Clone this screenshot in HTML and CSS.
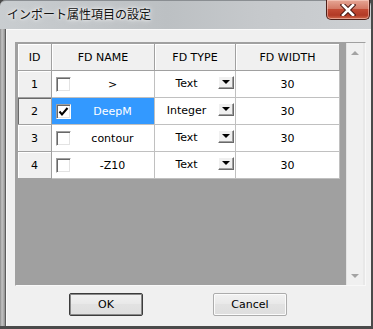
FILE: index.html
```html
<!DOCTYPE html>
<html lang="ja">
<head>
    <meta charset="UTF-8">
    <title>インポート属性項目の設定</title>
    <link rel="stylesheet" href="styles.css">
</head>
<body>
    <div class="window">
        <div class="titlebar">
            <span class="title">インポート属性項目の設定</span>
            <div class="close">
                <svg width="16" height="12" viewBox="0 0 16 12">
                    <path d="M3 1 L13 11 M13 1 L3 11" stroke="#4a1a14" stroke-width="4.6" stroke-linecap="square"/>
                    <path d="M3 1 L13 11 M13 1 L3 11" stroke="#fff" stroke-width="2.6" stroke-linecap="square"/>
                </svg>
            </div>
        </div>
        <div class="client">
            <div class="gridbox">
                <div class="table">
                    <div class="hcell">ID</div>
                    <div class="hcell">FD NAME</div>
                    <div class="hcell">FD TYPE</div>
                    <div class="hcell">FD WIDTH</div>

                    <div class="rowhead">1</div>
                    <div class="cell name"><span class="check"></span><span class="label">&gt;</span></div>
                    <div class="cell type"><span class="label">Text</span><span class="drop"></span></div>
                    <div class="cell">30</div>

                    <div class="rowhead current">2</div>
                    <div class="cell name selected">
                        <span class="check">
                            <svg width="11" height="11" viewBox="0 0 11 11"><path d="M1.5 5.5 L4 8.5 L9.5 2" fill="none" stroke="#000" stroke-width="2"/></svg>
                        </span>
                        <span class="label">DeepM</span>
                    </div>
                    <div class="cell type"><span class="label">Integer</span><span class="drop"></span></div>
                    <div class="cell">30</div>

                    <div class="rowhead">3</div>
                    <div class="cell name"><span class="check"></span><span class="label">contour</span></div>
                    <div class="cell type"><span class="label">Text</span><span class="drop"></span></div>
                    <div class="cell">30</div>

                    <div class="rowhead">4</div>
                    <div class="cell name"><span class="check"></span><span class="label">-Z10</span></div>
                    <div class="cell type"><span class="label">Text</span><span class="drop"></span></div>
                    <div class="cell">30</div>
                </div>
                <div class="vscroll">
                    <span class="arrow up"></span>
                    <span class="arrow down"></span>
                </div>
            </div>
            <div class="buttons">
                <button class="btn default">OK</button>
                <button class="btn">Cancel</button>
            </div>
        </div>
    </div>
</body>
</html>
```

FILE: styles.css
```css
body {
    margin: 0;
    width: 373px;
    height: 329px;
    overflow: hidden;
    background: #4a4a4a;
    font-family: "DejaVu Sans", sans-serif;
    font-size: 11px;
    color: #000;
}
.window {
    width: 373px;
    height: 329px;
    box-sizing: border-box;
    display: flex;
    flex-direction: column;
    border-right: 2px solid #4a4a4a;
    border-bottom: 3px solid #4a4a4a;
    border-radius: 6px 6px 0 0;
    background: linear-gradient(to right, #8a8a8a, #c4c4c4 2px, #a4a4a4 4px, #8c8c8c 5px);
}
.titlebar {
    height: 29px;
    display: flex;
    align-items: flex-start;
    border-radius: 6px 6px 0 0;
    border-top: 1px solid #8a8e92;
    box-sizing: border-box;
    background: linear-gradient(to right, #c9cdd0, #bcc0c3 45%, #c6c9cc 70%, #cdd0d3);
}
.title {
    padding: 4px 0 0 7px;
    font-family: "Noto Sans CJK JP", sans-serif;
    font-size: 12px;
    line-height: 18px;
    color: #111;
    text-shadow: 0 0 6px #fff, 0 0 3px #fff;
}
.close {
    margin-left: auto;
    margin-right: 1px;
    margin-top: -1px;
    width: 44px;
    height: 20px;
    box-sizing: border-box;
    display: flex;
    align-items: center;
    justify-content: center;
    border: 1px solid #4e2019;
    border-top: none;
    border-radius: 0 0 5px 5px;
    background: linear-gradient(to bottom, #e6a695, #d47a66 45%, #c24a34 50%, #b23a26 80%, #d06a4e);
    box-shadow: inset 0 0 0 1px rgba(255, 220, 210, 0.5);
}
.client {
    flex: 1;
    margin-left: 5px;
    border-left: 1px solid #5d5d5d;
    background: #f0f0f0;
    box-shadow: inset 1px 1px #fafafa;
    padding: 13px 0 0 9px;
}
.gridbox {
    width: 351px;
    height: 244px;
    box-sizing: border-box;
    border: 1px solid;
    border-color: #a0a0a0 #f8f8f8 #f8f8f8 #a0a0a0;
    background: #a0a0a0;
    display: flex;
    align-items: flex-start;
    padding: 1px 0 0 2px;
}
.table {
    display: grid;
    grid-template-columns: 34px 103px 81px 104px;
    grid-auto-rows: 27px;
}
.hcell, .rowhead, .cell {
    box-sizing: border-box;
    display: flex;
    align-items: center;
    justify-content: center;
    white-space: nowrap;
}
.hcell, .rowhead {
    background: #f0f0f0;
    border-right: 1px solid #a0a0a0;
    border-bottom: 1px solid #a0a0a0;
    box-shadow: inset 1px 1px #fff;
}
.rowhead.current {
    box-shadow: inset 1px 1px #696969;
}
.cell {
    background: #fff;
    border-right: 1px solid #c0c0c0;
    border-bottom: 1px solid #c0c0c0;
}
.cell.selected {
    background: #3399ff;
    color: #fff;
}
.name .label, .type .label {
    flex: 1;
    text-align: center;
}
.check {
    width: 15px;
    height: 15px;
    margin-left: 4px;
    box-sizing: border-box;
    border: 1px solid;
    border-color: #a0a0a0 #fff #fff #a0a0a0;
    box-shadow: inset 1px 1px #696969, inset -1px -1px #e3e3e3;
    background: #fff;
    display: flex;
    align-items: center;
    justify-content: center;
}
.type {
    align-items: flex-start;
}
.type .label {
    line-height: 26px;
}
.drop {
    width: 16px;
    height: 13px;
    margin: 5px 1px 0 0;
    box-sizing: border-box;
    border: 1px solid;
    border-color: #fff #696969 #696969 #fff;
    box-shadow: inset -1px -1px #a0a0a0;
    background: #f0f0f0;
    display: flex;
    align-items: center;
    justify-content: center;
}
.drop::after {
    content: "";
    border-left: 4px solid transparent;
    border-right: 4px solid transparent;
    border-top: 4px solid #000;
    margin-bottom: 1px;
}
.vscroll {
    margin-left: auto;
    margin-top: -1px;
    width: 19px;
    height: 242px;
    box-sizing: border-box;
    background: #f0f0f0;
    border-left: 1px solid #e3e3e3;
    border-right: 2px solid #e8e8e8;
    display: flex;
    flex-direction: column;
    align-items: center;
    justify-content: space-between;
    padding: 8px 0 7px;
}
.arrow {
    width: 0;
    height: 0;
    border-left: 4px solid transparent;
    border-right: 4px solid transparent;
}
.arrow.up {
    border-bottom: 4px solid #a3a3a3;
}
.arrow.down {
    border-top: 4px solid #a3a3a3;
}
.buttons {
    display: flex;
    gap: 70px;
    margin: 7px 0 0 54px;
}
.btn {
    width: 74px;
    height: 23px;
    padding: 0;
    font-family: "DejaVu Sans", sans-serif;
    font-size: 11px;
    color: #000;
    border: 1px solid #acacac;
    border-radius: 2px;
    background: linear-gradient(to bottom, #f2f2f2, #e8e8e8 50%, #e2e2e2 50%, #dedede);
    box-shadow: inset 0 0 0 1px #fbfbfb;
}
.btn.default {
    border-color: #3c3c3c;
    box-shadow: inset 0 0 0 1px #8a8a8a;
}
```
